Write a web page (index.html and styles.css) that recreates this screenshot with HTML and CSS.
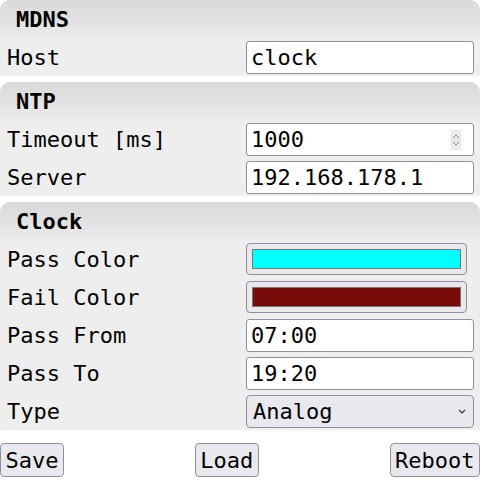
FILE: index.html
```html
<!DOCTYPE html>
<html>
<head>
<meta charset="utf-8">
<link rel="stylesheet" href="styles.css">
</head>
<body>
<div class="section">
  <div class="head">MDNS</div>
  <div class="row"><span class="label">Host</span><input class="field" type="text" value="clock"></div>
</div>
<div class="section">
  <div class="head">NTP</div>
  <div class="row"><span class="label">Timeout [ms]</span>
    <div class="field numfield"><span class="val">1000</span>
      <span class="spin"><svg width="10" height="16" viewBox="0 0 10 16"><polyline points="2,6 5,3 8,6" fill="none" stroke="#8a8a8a" stroke-width="1"/><polyline points="2,10 5,13 8,10" fill="none" stroke="#8a8a8a" stroke-width="1"/></svg></span>
    </div>
  </div>
  <div class="row"><span class="label">Server</span><input class="field" type="text" value="192.168.178.1"></div>
</div>
<div class="section">
  <div class="head">Clock</div>
  <div class="row"><span class="label">Pass Color</span><div class="colorbox"><div class="swatch swatch-cyan"></div></div></div>
  <div class="row"><span class="label">Fail Color</span><div class="colorbox"><div class="swatch swatch-red"></div></div></div>
  <div class="row"><span class="label">Pass From</span><input class="field" type="text" value="07:00"></div>
  <div class="row"><span class="label">Pass To</span><input class="field" type="text" value="19:20"></div>
  <div class="row"><span class="label">Type</span>
    <div class="field selectbox"><span class="val">Analog</span>
      <svg class="chev" width="10" height="8" viewBox="0 0 10 8"><polyline points="2,2 5,5 8,2" fill="none" stroke="#333" stroke-width="1.2"/></svg>
    </div>
  </div>
</div>
<div class="buttons">
  <button class="btn">Save</button>
  <button class="btn">Load</button>
  <button class="btn">Reboot</button>
</div>
</body>
</html>
```

FILE: styles.css
```css
html, body {
  margin: 0;
  padding: 0;
  background: #fff;
}
body {
  font-family: "DejaVu Sans Mono", monospace;
  font-size: 22px;
  color: #000;
  width: 480px;
}
.section {
  background: #eeeeee;
  border-radius: 10px 10px 0 0;
  margin-bottom: 6px;
}
.head {
  height: 38px;
  padding-left: 16px;
  padding-top: 2px;
  box-sizing: border-box;
  line-height: 36px;
  font-weight: bold;
  border-radius: 10px 10px 0 0;
  background: linear-gradient(to bottom, #d9d9d9, #ebebeb);
}
.row {
  height: 38px;
  display: grid;
  grid-template-columns: 239px 228px;
  align-items: center;
  padding-left: 7px;
}
.label {
  line-height: 26px;
  padding-top: 2px;
}
.field {
  box-sizing: border-box;
  height: 33px;
  width: 228px;
  margin: 0;
  border: 1px solid #8f8f9d;
  border-radius: 3px;
  background: #fff;
  font-family: "DejaVu Sans Mono", monospace;
  font-size: 22px;
  color: #000;
  padding: 1px 4px 0 4px;
  outline: none;
}
.numfield, .selectbox {
  display: flex;
  align-items: center;
  justify-content: space-between;
}
.spin {
  width: 10px;
  height: 20px;
  background: #e9e9ed;
  display: flex;
  align-items: center;
  justify-content: center;
  margin-right: 8px;
  border-radius: 2px;
}
.selectbox {
  background: #e9e9ed;
  border-radius: 4px;
  padding: 1px 4px 0 6px;
}
.chev {
  margin-right: 2px;
}
.colorbox {
  box-sizing: border-box;
  width: 221px;
  height: 32px;
  background: #e9e9ed;
  border: 1px solid #8f8f9d;
  border-radius: 4px;
  padding: 5px 5px;
}
.swatch {
  height: 100%;
  box-sizing: border-box;
  border: 1px solid #777;
}
.swatch-cyan { background: #00ffff; }
.swatch-red { background: #770b08; }
.buttons {
  display: flex;
  justify-content: space-between;
  width: 480px;
  margin-top: 13px;
}
.btn {
  font-family: "DejaVu Sans Mono", monospace;
  font-size: 22px;
  height: 34px;
  padding: 1px 4.5px 0 4.5px;
  margin: 0;
  background: #e9e9ed;
  border: 1px solid #8f8f9d;
  border-radius: 4px;
  color: #000;
}
```
